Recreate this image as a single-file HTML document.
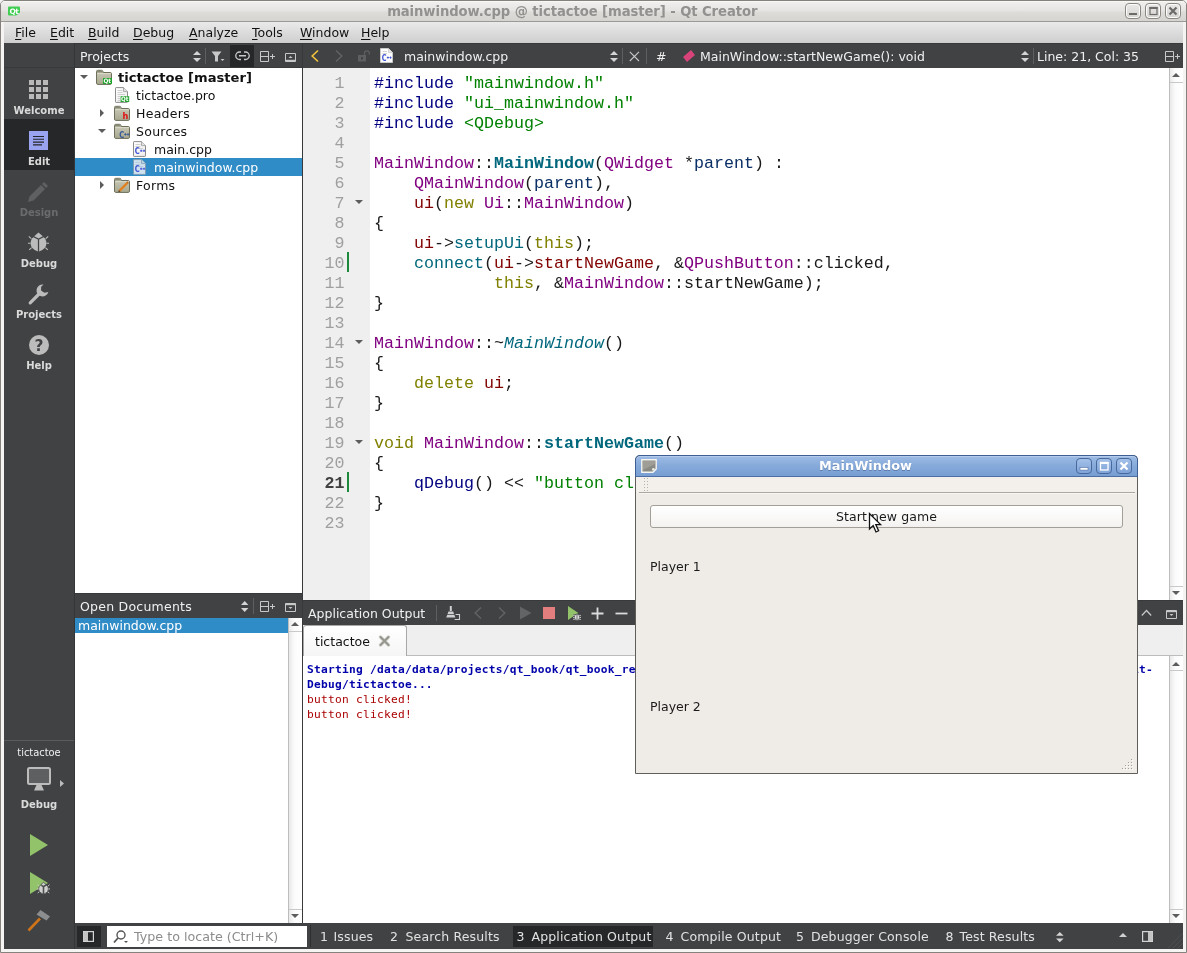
<!DOCTYPE html>
<html>
<head>
<meta charset="utf-8">
<title>mainwindow.cpp @ tictactoe [master] - Qt Creator</title>
<style>
*{box-sizing:border-box;margin:0;padding:0}
html,body{width:1187px;height:953px;overflow:hidden}
body{position:relative;background:#f5f4f2;font-family:"DejaVu Sans","Liberation Sans",sans-serif;font-size:13.33px;color:#000}
.abs{position:absolute}
.t{position:absolute;white-space:nowrap;line-height:1}
svg{position:absolute;overflow:visible}
/* frame */
#frame{left:0;top:0;width:1187px;height:953px;border:1px solid #85827e;border-radius:5px 5px 0 0}
#title{left:1px;top:1px;width:1185px;height:20px;background:linear-gradient(#fbfbfa 0,#efeeec 8%,#e6e4e2 50%,#dedcd9 54%,#d6d4d1 100%);border-radius:4px 4px 0 0}
#titleline{left:1px;top:21px;width:1185px;height:1px;background:#9c9a97}
#menubar{left:4px;top:22px;width:1179px;height:21px;background:linear-gradient(#eaeaea,#cecece)}
.menu{top:27px;font-size:12.5px;color:#111}
.menu u{text-decoration:underline;text-underline-offset:2px}
.dark{background:#404244}
.tb{color:#f0f0f0;font-size:12.5px;margin-top:2px}
.wb{top:3px;width:16px;height:16px;border:1px solid #8a8783;border-radius:4px;box-shadow:inset 0 0 0 1px #fbfbfa;background:linear-gradient(#e9e8e6,#d6d4d1)}
.pb{top:458px;width:16px;height:16px;border:1px solid #48699c;border-radius:4px;background:linear-gradient(#a3c0e8,#7fa4d8)}
/* sidebar */
.mode{left:4px;width:70px;height:51px;color:#dadada;font-weight:bold;font-size:10px;text-align:center}
.mode span{position:absolute;left:0;width:70px;top:37px;line-height:11px}
.vsb{width:14px;border-left:1px solid #bdbdbd;background:linear-gradient(90deg,#e9e9e9,#fbfbfb 40%,#fff)}
/* tree */
.tree{font-size:12.5px;color:#111;margin-top:2px}
/* code */
.code{margin-top:2px;font-family:"Liberation Mono","DejaVu Sans Mono",monospace;font-size:16.66px;white-space:pre;line-height:20px}
.ln{position:absolute;left:303px;width:41.5px;text-align:right;color:#9f9f9f;height:20px}
.cl{position:absolute;left:374px;height:20px;color:#1a1a1a}
.pp{color:#000080}.st{color:#008000}.ty{color:#800080}.fn{color:#00677c}.kw{color:#808000}.mv{color:#800000}.pa{color:#092e64}
.cur{color:#404040;font-weight:bold}
.b{font-weight:bold}.i{font-style:italic}
.sb{color:#e2e2e2;letter-spacing:.15px}
.out{font-family:"DejaVu Sans Mono","Liberation Mono",monospace;font-size:11.2px;letter-spacing:0.257px;white-space:pre;line-height:15px}
</style>
</head>
<body>
<div id="root" style="position:absolute;left:0;top:0;width:1187px;height:953px;will-change:transform">
<svg width="0" height="0" style="left:0;top:0"><defs><linearGradient id="fg" x1="0" y1="0" x2="0" y2="1"><stop offset="0" stop-color="#cbcbbb"/><stop offset="1" stop-color="#a8a88f"/></linearGradient><linearGradient id="pg" x1="0" y1="0" x2="1" y2="1"><stop offset="0" stop-color="#ffffff"/><stop offset="1" stop-color="#ededed"/></linearGradient></defs></svg>
<div id="frame" class="abs"></div>
<div id="title" class="abs"></div>
<div id="titleline" class="abs"></div>
<div id="menubar" class="abs"></div>
<div class="t" style="left:0;width:1144.5px;text-align:center;top:4.8px;font-weight:bold;font-size:13.2px;color:#939190;letter-spacing:-0.08px">mainwindow.cpp @ tictactoe [master] - Qt Creator</div>
<svg style="left:8px;top:6px" width="14" height="12" viewBox="0 0 14 12"><path d="M0 1.5Q0 0.5 1 0.5L11 0.5Q12 0.5 12 1.5L12 7L9.5 9.5L1 9.5Q0 9.5 0 8.5Z" fill="#41cd52"/><path d="M8 9.5L12 6.5L12 10L10 11Z" fill="#d8d8d8" opacity=".8"/><text x="1.6" y="7.6" font-size="7.5" font-weight="bold" fill="#fff" font-family="DejaVu Sans, Liberation Sans, sans-serif" letter-spacing="-0.6">Qt</text></svg>
<div class="abs wb" style="left:1125px"></div><div class="abs wb" style="left:1145px"></div><div class="abs wb" style="left:1165px"></div>
<svg style="left:1125px;top:3px" width="56" height="16" viewBox="0 0 56 16"><rect x="4" y="10" width="8" height="2" fill="#6d6b68"/><rect x="25" y="4.5" width="7" height="7" fill="none" stroke="#6d6b68" stroke-width="1.2"/><rect x="24.4" y="4" width="8.2" height="2" fill="#6d6b68"/><path d="M44.5 4.5L51.5 11.5M51.5 4.5L44.5 11.5" stroke="#6d6b68" stroke-width="2.2"/></svg>

<div class="t menu" style="left:15px"><u>F</u>ile</div>
<div class="t menu" style="left:50px"><u>E</u>dit</div>
<div class="t menu" style="left:88px"><u>B</u>uild</div>
<div class="t menu" style="left:133px"><u>D</u>ebug</div>
<div class="t menu" style="left:189px"><u>A</u>nalyze</div>
<div class="t menu" style="left:252px"><u>T</u>ools</div>
<div class="t menu" style="left:300px"><u>W</u>indow</div>
<div class="t menu" style="left:361px"><u>H</u>elp</div>

<div class="abs dark" style="left:4px;top:43px;width:70px;height:906px"></div>
<div class="abs" style="left:4px;top:67px;width:70px;height:1px;background:#38393b"></div>
<div class="abs" style="left:74px;top:43px;width:1px;height:906px;background:#353638"></div>
<div class="abs" style="left:4px;top:119px;width:70px;height:51px;background:#262728"></div>
<div class="abs mode" style="top:68px"><span>Welcome</span></div>
<div class="abs mode" style="top:119px"><span>Edit</span></div>
<div class="abs mode" style="top:170px;color:#6a6b6d"><span>Design</span></div>
<div class="abs mode" style="top:221px"><span>Debug</span></div>
<div class="abs mode" style="top:272px"><span>Projects</span></div>
<div class="abs mode" style="top:323px"><span>Help</span></div>
<!-- welcome grid -->
<svg style="left:29px;top:80px" width="19" height="19" viewBox="0 0 19 19" fill="#b9b9b9"><rect x="0" y="0" width="5" height="5"/><rect x="7" y="0" width="5" height="5"/><rect x="14" y="0" width="5" height="5"/><rect x="0" y="7" width="5" height="5"/><rect x="7" y="7" width="5" height="5"/><rect x="14" y="7" width="5" height="5"/><rect x="0" y="14" width="5" height="5"/><rect x="7" y="14" width="5" height="5"/><rect x="14" y="14" width="5" height="5"/></svg>
<!-- edit icon -->
<svg style="left:29px;top:131px" width="19" height="19" viewBox="0 0 19 19"><rect width="19" height="19" fill="#99a3ef"/><path d="M4 5.5H15M4 8.3H15M4 11.1H15M4 13.9H13" stroke="#262728" stroke-width="1.1"/></svg>
<!-- design pencil -->
<svg style="left:28px;top:182px" width="20" height="20" viewBox="0 0 20 20" fill="#5e6062"><path d="M0 20L1.5 14.5L13 3L17 7L5.5 18.5Z"/><path d="M14 2L16 0L20 4L18 6Z"/></svg>
<!-- debug bug -->
<svg style="left:28px;top:232px" width="21" height="20" viewBox="0 0 21 20"><g fill="#bcbcbc"><path d="M6.2 4.2L10.5 0.6L14.8 4.2L10.5 6.5Z"/><path d="M9.9 7.6L5.4 5.2Q2.6 7 2.6 11.5Q2.6 17 9.9 19.6Z"/><path d="M11.1 7.6L15.6 5.2Q18.4 7 18.4 11.5Q18.4 17 11.1 19.6Z"/></g><path d="M3.2 6.6L0.8 4.4M2.6 11.2H0M3.6 15.6L1.2 17.8M17.8 6.6L20.2 4.4M18.4 11.2H21M17.4 15.6L19.8 17.8" stroke="#bcbcbc" stroke-width="1.1"/></svg>
<!-- projects wrench -->
<svg style="left:28px;top:284px" width="21" height="21" viewBox="0 0 21 21"><path d="M2.2 18.8L11.5 9.5" stroke="#bcbcbc" stroke-width="3.2" stroke-linecap="round"/><path d="M14.6 0.4A6 6 0 1 0 20.4 7L16.6 8.4L13 6.6L12.6 3Z" fill="#bcbcbc" transform="rotate(8 14 7)"/></svg>
<!-- help -->
<svg style="left:29px;top:335px" width="20" height="20" viewBox="0 0 20 20"><circle cx="10" cy="10" r="10" fill="#bcbcbc"/><text x="10" y="15.6" text-anchor="middle" font-size="15.5" font-weight="bold" fill="#404244" font-family="DejaVu Sans, Liberation Sans, sans-serif">?</text></svg>
<!-- bottom target selector -->
<div class="abs" style="left:4px;top:740px;width:70px;height:1px;background:#595b5c"></div>
<div class="t" style="left:4px;width:70px;text-align:center;top:747.5px;font-size:9.9px;color:#f0f0f0">tictactoe</div>
<div class="t" style="left:4px;width:70px;text-align:center;top:800.3px;font-size:10px;font-weight:bold;color:#dadada">Debug</div>
<svg style="left:27px;top:767.3px" width="40" height="26" viewBox="0 0 40 26"><rect x="1" y="1" width="22" height="16" rx="1.5" fill="#5d5f61" stroke="#bcbcbc" stroke-width="2"/><path d="M9.5 18L7 23.6H17L14.5 18Z" fill="#bcbcbc"/><path d="M33 13L37 16.5L33 20Z" fill="#bcbcbc"/></svg>
<!-- run buttons -->
<svg style="left:29px;top:833px" width="20" height="24" viewBox="0 0 20 24"><path d="M1 1L19 12L1 23Z" fill="#92c36a"/></svg>
<svg style="left:29px;top:871.3px" width="24" height="26" viewBox="0 0 24 26"><path d="M1 1L19 12L1 23Z" fill="#92c36a"/><g transform="translate(8,11) scale(0.62)"><g fill="#d0d0d0" stroke="#404244" stroke-width="1.2"><path d="M6.2 4.2L10.5 0.6L14.8 4.2L10.5 6.5Z"/><path d="M9.9 7.6L5.4 5.2Q2.6 7 2.6 11.5Q2.6 17 9.9 19.6Z"/><path d="M11.1 7.6L15.6 5.2Q18.4 7 18.4 11.5Q18.4 17 11.1 19.6Z"/></g><path d="M3.2 6.6L0.8 4.4M2.6 11.2H0M3.6 15.6L1.2 17.8M17.8 6.6L20.2 4.4M18.4 11.2H21M17.4 15.6L19.8 17.8" stroke="#d0d0d0" stroke-width="1.5"/></g></svg>
<svg style="left:27px;top:909px" width="24" height="24" viewBox="0 0 24 24"><path d="M1.5 21.5L13 9.5" stroke="#cf7418" stroke-width="2.6"/><path d="M9.5 5.5L13.5 1L23 7.5L19.5 11.5Z" fill="#8b8d8f"/></svg>

<div class="abs dark" style="left:75px;top:43px;width:227px;height:25px"></div>
<div class="abs" style="left:75px;top:67px;width:227px;height:1px;background:#38393b"></div>
<div class="abs" style="left:75px;top:43px;width:1108px;height:1px;background:#38393b"></div>
<div class="abs" style="left:75px;top:68px;width:227px;height:525px;background:#fff"></div>
<div class="abs" style="left:302px;top:43px;width:1px;height:880px;background:#38393b"></div>
<div class="t tb" style="left:80px;top:49px">Projects</div>
<svg style="left:193px;top:51px" width="8" height="11" viewBox="0 0 8 11"><path d="M0 4H8L4 0Z M0 7H8L4 11Z" fill="#d4d4d4"/></svg>
<div class="abs" style="left:205px;top:48px;width:1px;height:16px;background:#5d5f61"></div>
<svg style="left:211px;top:51px" width="14" height="11" viewBox="0 0 14 11"><path d="M0.5 0.5H10.5L7 5V10.5H4V5Z" fill="#c8c8c8"/><path d="M9.5 8H13.5L11.5 10Z" fill="#c8c8c8"/></svg>
<div class="abs" style="left:230px;top:45px;width:24px;height:22px;background:#262728"></div>
<svg style="left:235px;top:51px" width="15" height="10" viewBox="0 0 15 10"><path d="M6 1H4.5A3.5 3.5 0 0 0 4.5 8.5H6M9 1H10.5A3.5 3.5 0 0 1 10.5 8.5H9" fill="none" stroke="#c8c8c8" stroke-width="1.3"/><path d="M4 4.75H11" stroke="#c8c8c8" stroke-width="1.5"/></svg>
<svg style="left:260px;top:51px" width="15" height="12" viewBox="0 0 15 12"><path d="M0.5 0.5H8.5V10.5H0.5Z M0.5 5.5H8.5" fill="none" stroke="#c8c8c8"/><path d="M10 5.5H15M12.5 3V8" stroke="#c8c8c8"/></svg>
<svg style="left:285px;top:53px" width="12" height="9" viewBox="0 0 12 9"><path d="M0.5 0.5H10.5V8.5H0.5Z" fill="none" stroke="#c8c8c8"/><path d="M0.5 7.6H10.5" stroke="#c8c8c8" stroke-width="1.6"/><path d="M3.5 5H7.5L5.5 3Z" fill="#c8c8c8"/></svg>
<div class="abs" style="left:75px;top:158px;width:227px;height:18px;background:#308cc6"></div>
<svg style="left:80px;top:75px" width="8" height="4" viewBox="0 0 8 4"><path d="M0 0H8L4 4Z" fill="#5c5c5c"/></svg>
<svg style="left:96px;top:69px" width="16" height="16" viewBox="0 0 16 16"><path d="M0.5 2.5Q0.5 1.3 1.7 1.3L5.6 1.3Q6.6 1.3 6.9 2.2L7.3 3.5L14.3 3.5Q15.5 3.5 15.5 4.7L15.5 14.1Q15.5 15.4 14.2 15.4L1.8 15.4Q0.5 15.4 0.5 14.1Z" fill="url(#fg)" stroke="#6e6f5a"/><path d="M1 1.9H6.4L7 3.6H1Z" fill="#8b8c76"/><path d="M1.2 4.6H14.8" stroke="#dadacb" stroke-width="1"/><rect x="7" y="9" width="9" height="6" fill="#21a32d"/><text x="7.5" y="14" font-size="6" font-weight="bold" fill="#fff" font-family="DejaVu Sans, sans-serif" textLength="7.6" lengthAdjust="spacingAndGlyphs">Qt</text></svg>
<div class="t tree" style="left:118px;top:70px;font-weight:bold;font-size:13.1px;margin-top:1px">tictactoe [master]</div>
<svg style="left:114px;top:87px" width="16" height="16" viewBox="0 0 16 16"><path d="M1.5 1.2Q1.5 0.6 2.1 0.6L9.5 0.6L13.5 4.6L13.5 14.8Q13.5 15.4 12.9 15.4L2.1 15.4Q1.5 15.4 1.5 14.8Z" fill="url(#pg)" stroke="#8c8c8c"/><path d="M9.5 0.6V4.6H13.5" fill="#e2e2e2" stroke="#9a9a9a" stroke-width=".8"/><path d="M3.5 3.5H8.5M3.5 5.5H8.5M3.5 7.5H11" stroke="#c9c9c9" stroke-width=".9"/><path d="M3.5 9.5H6M3.5 11.5H6M3.5 13.5H6" stroke="#c9c9c9" stroke-width=".9"/><rect x="6.6" y="9.2" width="8.6" height="5.8" fill="#21a32d"/><text x="7.1" y="14" font-size="6" font-weight="bold" fill="#fff" font-family="DejaVu Sans, sans-serif" textLength="7.4" lengthAdjust="spacingAndGlyphs">Qt</text></svg>
<div class="t tree" style="left:136px;top:88px">tictactoe.pro</div>
<svg style="left:100px;top:109px" width="4" height="8" viewBox="0 0 4 8"><path d="M0 0V8L4 4Z" fill="#5c5c5c"/></svg>
<svg style="left:114px;top:105px" width="16" height="16" viewBox="0 0 16 16"><path d="M0.5 2.5Q0.5 1.3 1.7 1.3L5.6 1.3Q6.6 1.3 6.9 2.2L7.3 3.5L14.3 3.5Q15.5 3.5 15.5 4.7L15.5 14.1Q15.5 15.4 14.2 15.4L1.8 15.4Q0.5 15.4 0.5 14.1Z" fill="url(#fg)" stroke="#6e6f5a"/><path d="M1 1.9H6.4L7 3.6H1Z" fill="#8b8c76"/><path d="M1.2 4.6H14.8" stroke="#dadacb" stroke-width="1"/><text x="8.4" y="13.6" font-size="8.2" font-weight="bold" fill="#e01010" font-family="DejaVu Sans, sans-serif">h</text></svg>
<div class="t tree" style="left:136px;top:106px;letter-spacing:.28px">Headers</div>
<svg style="left:98px;top:129px" width="8" height="4" viewBox="0 0 8 4"><path d="M0 0H8L4 4Z" fill="#5c5c5c"/></svg>
<svg style="left:114px;top:123px" width="16" height="16" viewBox="0 0 16 16"><path d="M0.5 2.5Q0.5 1.3 1.7 1.3L5.6 1.3Q6.6 1.3 6.9 2.2L7.3 3.5L14.3 3.5Q15.5 3.5 15.5 4.7L15.5 14.1Q15.5 15.4 14.2 15.4L1.8 15.4Q0.5 15.4 0.5 14.1Z" fill="url(#fg)" stroke="#6e6f5a"/><path d="M1 1.9H6.4L7 3.6H1Z" fill="#8b8c76"/><path d="M1.2 4.6H14.8" stroke="#dadacb" stroke-width="1"/><text x="5.3" y="14.6" font-size="9.4" font-weight="bold" fill="#35589a" font-family="DejaVu Sans, sans-serif" textLength="5" lengthAdjust="spacingAndGlyphs">C</text><path d="M10.2 11.4H12.6M11.4 10.2V12.6M12.9 11.4H15.3M14.1 10.2V12.6" stroke="#35589a" stroke-width=".9"/></svg>
<div class="t tree" style="left:136px;top:124px;letter-spacing:.28px">Sources</div>
<svg style="left:132px;top:141px" width="16" height="16" viewBox="0 0 16 16"><path d="M1.5 1.2Q1.5 0.6 2.1 0.6L9.5 0.6L13.5 4.6L13.5 14.8Q13.5 15.4 12.9 15.4L2.1 15.4Q1.5 15.4 1.5 14.8Z" fill="url(#pg)" stroke="#8c8c8c"/><path d="M9.5 0.6V4.6H13.5" fill="#e2e2e2" stroke="#9a9a9a" stroke-width=".8"/><path d="M3.5 3.5H8.5M3.5 5.5H8.5M3.5 7.5H11" stroke="#c9c9c9" stroke-width=".9"/><text x="2.8" y="13" font-size="9.2" font-weight="bold" fill="#3c50d6" font-family="DejaVu Sans, sans-serif" textLength="5" lengthAdjust="spacingAndGlyphs">C</text><path d="M8 9.8H10.4M9.2 8.6V11M10.8 9.8H13.2M12 8.6V11" stroke="#3c50d6" stroke-width=".9"/></svg>
<div class="t tree" style="left:154px;top:142px">main.cpp</div>
<svg style="left:132px;top:159px" width="16" height="16" viewBox="0 0 16 16"><path d="M1.5 1.2Q1.5 0.6 2.1 0.6L9.5 0.6L13.5 4.6L13.5 14.8Q13.5 15.4 12.9 15.4L2.1 15.4Q1.5 15.4 1.5 14.8Z" fill="#cfe1ef" stroke="#7f9cb3"/><path d="M9.5 0.6V4.6H13.5" fill="#bcd3e4" stroke="#7f9cb3" stroke-width=".8"/><path d="M3.5 3.5H8.5M3.5 5.5H8.5M3.5 7.5H11" stroke="#b4c9d9" stroke-width=".9"/><text x="2.8" y="13" font-size="9.2" font-weight="bold" fill="#3c50d6" font-family="DejaVu Sans, sans-serif" textLength="5" lengthAdjust="spacingAndGlyphs">C</text><path d="M8 9.8H10.4M9.2 8.6V11M10.8 9.8H13.2M12 8.6V11" stroke="#3c50d6" stroke-width=".9"/></svg>
<div class="t tree" style="left:154px;top:160px;color:#fff">mainwindow.cpp</div>
<svg style="left:100px;top:181px" width="4" height="8" viewBox="0 0 4 8"><path d="M0 0V8L4 4Z" fill="#5c5c5c"/></svg>
<svg style="left:114px;top:177px" width="16" height="16" viewBox="0 0 16 16"><path d="M0.5 2.5Q0.5 1.3 1.7 1.3L5.6 1.3Q6.6 1.3 6.9 2.2L7.3 3.5L14.3 3.5Q15.5 3.5 15.5 4.7L15.5 14.1Q15.5 15.4 14.2 15.4L1.8 15.4Q0.5 15.4 0.5 14.1Z" fill="url(#fg)" stroke="#6e6f5a"/><path d="M1 1.9H6.4L7 3.6H1Z" fill="#8b8c76"/><path d="M1.2 4.6H14.8" stroke="#dadacb" stroke-width="1"/><path d="M5.6 13.8L13 6.2" stroke="#e67e17" stroke-width="2.3"/><path d="M4.2 15.2L4.9 12.9L6.5 14.5Z" fill="#5a3c16"/><path d="M12.2 5.4L13.3 4.3L14.9 5.9L13.8 7Z" fill="#c96a10"/></svg>
<div class="t tree" style="left:136px;top:178px;letter-spacing:.28px">Forms</div>
<div class="abs dark" style="left:75px;top:593px;width:227px;height:25px"></div>
<div class="abs" style="left:75px;top:593px;width:227px;height:1px;background:#38393b"></div>
<div class="abs" style="left:75px;top:618px;width:227px;height:305px;background:#fff"></div>
<div class="t tb" style="left:80px;top:599px;letter-spacing:.24px">Open Documents</div>
<svg style="left:240.7px;top:601px" width="7.4" height="11" viewBox="0 0 8 11" preserveAspectRatio="none"><path d="M0 4H8L4 0Z M0 7H8L4 11Z" fill="#d4d4d4"/></svg>
<div class="abs" style="left:253px;top:598px;width:1px;height:16px;background:#5d5f61"></div>
<svg style="left:260px;top:601px" width="15" height="12" viewBox="0 0 15 12"><path d="M0.5 0.5H8.5V10.5H0.5Z M0.5 5.5H8.5" fill="none" stroke="#c8c8c8"/><path d="M10 5.5H15M12.5 3V8" stroke="#c8c8c8"/></svg>
<svg style="left:285px;top:603px" width="12" height="9" viewBox="0 0 12 9"><path d="M0.5 0.5H10.5V8.5H0.5Z" fill="none" stroke="#c8c8c8"/><path d="M0.5 1.4H10.5" stroke="#c8c8c8" stroke-width="1.6"/><path d="M3.5 4H7.5L5.5 6Z" fill="#c8c8c8"/></svg>
<div class="abs" style="left:75px;top:618px;width:213px;height:15px;background:#308cc6"></div>
<div class="t tree" style="left:78px;top:618.3px;color:#fff">mainwindow.cpp</div>
<div class="abs vsb" style="left:288px;top:618px;height:305px"></div>
<svg style="left:291px;top:622px" width="8" height="4" viewBox="0 0 8 4"><path d="M0 4H8L4 0Z" fill="#5c5c5c"/></svg>
<svg style="left:291px;top:914px" width="8" height="4" viewBox="0 0 8 4"><path d="M0 0H8L4 4Z" fill="#5c5c5c"/></svg>
<div class="abs" style="left:289px;top:631px;width:13px;height:1px;background:#c9c9c9"></div>
<div class="abs" style="left:289px;top:909px;width:13px;height:1px;background:#c9c9c9"></div>

<div class="abs dark" style="left:303px;top:43px;width:880px;height:25px"></div>
<div class="abs" style="left:303px;top:43px;width:880px;height:1px;background:#38393b"></div>
<div class="abs" style="left:303px;top:68px;width:67px;height:532px;background:#efefef"></div>
<div class="abs" style="left:370px;top:68px;width:799px;height:532px;background:#fff"></div>
<svg style="left:311px;top:50px" width="8" height="12" viewBox="0 0 8 12"><path d="M7 0.5L1.2 6L7 11.5" fill="none" stroke="#f3c33c" stroke-width="1.6"/></svg>
<svg style="left:335px;top:50px" width="8" height="12" viewBox="0 0 8 12"><path d="M1 0.5L6.8 6L1 11.5" fill="none" stroke="#626466" stroke-width="1.4"/></svg>
<svg style="left:358px;top:50px" width="13" height="12" viewBox="0 0 13 12"><rect x="0" y="5" width="8" height="6.5" fill="#5d5f61"/><rect x="3" y="7" width="2" height="2.5" fill="#404244"/><path d="M6.5 5V3.2A2.4 2.4 0 0 1 11.3 3.2V4.5" fill="none" stroke="#5d5f61" stroke-width="1.2"/></svg>
<svg style="left:380px;top:48px" width="13" height="15" viewBox="0 0 13 15"><path d="M0.5 0.5L8.5 0.5L12.5 4.5L12.5 14.5L0.5 14.5Z" fill="#fdfdfd" stroke="#c9c9c9"/><path d="M8.5 0.5V4.5H12.5" fill="#e8e8e8" stroke="#c9c9c9" stroke-width=".8"/><path d="M2.5 3.5H7M2.5 5.5H7" stroke="#d0d0d0" stroke-width=".9"/><text x="1.8" y="12.6" font-size="8.6" font-weight="bold" fill="#3c50d6" font-family="DejaVu Sans, sans-serif" textLength="4.8" lengthAdjust="spacingAndGlyphs">C</text><path d="M6.8 9.6H9M7.9 8.5V10.7M9.4 9.6H11.6M10.5 8.5V10.7" stroke="#3c50d6" stroke-width=".9"/></svg>
<div class="t tb" style="left:404px;top:49px">mainwindow.cpp</div>
<svg style="left:610px;top:51px" width="8" height="11" viewBox="0 0 8 11"><path d="M0 4H8L4 0Z M0 7H8L4 11Z" fill="#d4d4d4"/></svg>
<div class="abs" style="left:622px;top:48px;width:1px;height:16px;background:#5d5f61"></div>
<svg style="left:629px;top:51px" width="11" height="11" viewBox="0 0 11 11"><path d="M0.8 0.8L10 10M10 0.8L0.8 10" stroke="#c8c8c8" stroke-width="1.1"/></svg>
<div class="abs" style="left:646px;top:48px;width:1px;height:16px;background:#5d5f61"></div>
<div class="t tb" style="left:656px;top:49px">#</div>
<svg style="left:683px;top:50px" width="12" height="12" viewBox="0 0 12 12"><path d="M0 7L8 0L12 5L4 12Z" fill="#d8447a"/></svg>
<div class="t tb" style="left:700px;top:49px">MainWindow::startNewGame(): void</div>
<svg style="left:1021px;top:51px" width="8" height="11" viewBox="0 0 8 11"><path d="M0 4H8L4 0Z M0 7H8L4 11Z" fill="#d4d4d4"/></svg>
<div class="abs" style="left:1033px;top:48px;width:1px;height:16px;background:#5d5f61"></div>
<div class="t tb" style="left:1037px;top:49px">Line: 21, Col: 35</div>
<svg style="left:1165px;top:51px" width="15" height="12" viewBox="0 0 15 12"><path d="M0.5 0.5H8.5V10.5H0.5Z M0.5 5.5H8.5" fill="none" stroke="#c8c8c8"/><path d="M10 5.5H15M12.5 3V8" stroke="#c8c8c8"/></svg>
<div class="abs vsb" style="left:1169px;top:68px;height:532px"></div>
<svg style="left:1172px;top:73px" width="8" height="4" viewBox="0 0 8 4"><path d="M0 4H8L4 0Z" fill="#5c5c5c"/></svg>
<svg style="left:1172px;top:591px" width="8" height="4" viewBox="0 0 8 4"><path d="M0 0H8L4 4Z" fill="#5c5c5c"/></svg>
<div class="abs" style="left:1170px;top:82px;width:13px;height:1px;background:#c9c9c9"></div>
<div class="abs" style="left:1170px;top:586px;width:13px;height:1px;background:#c9c9c9"></div>
<div class="ln code" style="top:72px">1</div><div class="cl code" style="top:72px"><span class="pp">#include</span> <span class="st">"mainwindow.h"</span></div>
<div class="ln code" style="top:92px">2</div><div class="cl code" style="top:92px"><span class="pp">#include</span> <span class="st">"ui_mainwindow.h"</span></div>
<div class="ln code" style="top:112px">3</div><div class="cl code" style="top:112px"><span class="pp">#include</span> <span class="st">&lt;QDebug&gt;</span></div>
<div class="ln code" style="top:132px">4</div><div class="cl code" style="top:132px"></div>
<div class="ln code" style="top:152px">5</div><div class="cl code" style="top:152px"><span class="ty">MainWindow</span>::<span class="fn b">MainWindow</span>(<span class="ty">QWidget</span> *<span class="pa">parent</span>) :</div>
<div class="ln code" style="top:172px">6</div><div class="cl code" style="top:172px">    <span class="ty">QMainWindow</span>(<span class="pa">parent</span>),</div>
<div class="ln code" style="top:192px">7</div><div class="cl code" style="top:192px">    <span class="mv">ui</span>(<span class="kw">new</span> <span class="ty">Ui</span>::<span class="ty">MainWindow</span>)</div>
<div class="ln code" style="top:212px">8</div><div class="cl code" style="top:212px">{</div>
<div class="ln code" style="top:232px">9</div><div class="cl code" style="top:232px">    <span class="mv">ui</span>-&gt;<span class="fn">setupUi</span>(<span class="kw">this</span>);</div>
<div class="ln code" style="top:252px">10</div><div class="cl code" style="top:252px">    <span class="fn">connect</span>(<span class="mv">ui</span>-&gt;<span class="mv">startNewGame</span>, &amp;<span class="ty">QPushButton</span>::clicked,</div>
<div class="ln code" style="top:272px">11</div><div class="cl code" style="top:272px">            <span class="kw">this</span>, &amp;<span class="ty">MainWindow</span>::startNewGame);</div>
<div class="ln code" style="top:292px">12</div><div class="cl code" style="top:292px">}</div>
<div class="ln code" style="top:312px">13</div><div class="cl code" style="top:312px"></div>
<div class="ln code" style="top:332px">14</div><div class="cl code" style="top:332px"><span class="ty">MainWindow</span>::~<span class="fn i">MainWindow</span>()</div>
<div class="ln code" style="top:352px">15</div><div class="cl code" style="top:352px">{</div>
<div class="ln code" style="top:372px">16</div><div class="cl code" style="top:372px">    <span class="kw">delete</span> <span class="mv">ui</span>;</div>
<div class="ln code" style="top:392px">17</div><div class="cl code" style="top:392px">}</div>
<div class="ln code" style="top:412px">18</div><div class="cl code" style="top:412px"></div>
<div class="ln code" style="top:432px">19</div><div class="cl code" style="top:432px"><span class="kw">void</span> <span class="ty">MainWindow</span>::<span class="fn b">startNewGame</span>()</div>
<div class="ln code" style="top:452px">20</div><div class="cl code" style="top:452px">{</div>
<div class="ln code cur" style="top:472px">21</div><div class="cl code" style="top:472px">    <span class="pp">qDebug</span>() &lt;&lt; <span class="st">"button clicked!"</span>;</div>
<div class="ln code" style="top:492px">22</div><div class="cl code" style="top:492px">}</div>
<div class="ln code" style="top:512px">23</div><div class="cl code" style="top:512px"></div>
<svg style="left:355px;top:200px" width="8" height="4" viewBox="0 0 8 4"><path d="M0 0H8L4 4Z" fill="#5c5c5c"/></svg>
<svg style="left:355px;top:340px" width="8" height="4" viewBox="0 0 8 4"><path d="M0 0H8L4 4Z" fill="#5c5c5c"/></svg>
<svg style="left:355px;top:440px" width="8" height="4" viewBox="0 0 8 4"><path d="M0 0H8L4 4Z" fill="#5c5c5c"/></svg>
<div class="abs" style="left:347px;top:252px;width:2px;height:20px;background:#1a8a3a"></div>
<div class="abs" style="left:347px;top:472px;width:2px;height:20px;background:#1a8a3a"></div>

<div class="abs dark" style="left:303px;top:600px;width:880px;height:25px"></div>
<div class="abs" style="left:303px;top:600px;width:880px;height:1px;background:#38393b"></div>
<div class="t tb" style="left:308px;top:606px">Application Output</div>
<div class="abs" style="left:436px;top:605px;width:1px;height:16px;background:#5d5f61"></div>
<svg style="left:445px;top:606px" width="16" height="15" viewBox="0 0 16 15"><path d="M4.8 0H6.8V5H4.8Z" fill="#d0d0d0"/><path d="M3.4 5.6H8.2L9 8H2.6Z" fill="#d0d0d0"/><path d="M2.3 8.8H9.3L10.4 11.6H1.2Z" fill="#d0d0d0"/><path d="M10.6 8.5H14.5V13.5H9.6" fill="none" stroke="#d0d0d0" stroke-width="1.1"/></svg>
<svg style="left:474px;top:607px" width="8" height="12" viewBox="0 0 8 12"><path d="M7 0.5L1.2 6L7 11.5" fill="none" stroke="#626466" stroke-width="1.4"/></svg>
<svg style="left:498px;top:607px" width="8" height="12" viewBox="0 0 8 12"><path d="M1 0.5L6.8 6L1 11.5" fill="none" stroke="#626466" stroke-width="1.4"/></svg>
<svg style="left:520px;top:606px" width="12" height="14" viewBox="0 0 12 14"><path d="M0 0.5L11.5 7L0 13.5Z" fill="#626466"/></svg>
<div class="abs" style="left:543px;top:607px;width:12px;height:12px;background:#e37e7e"></div>
<svg style="left:568px;top:606px" width="15" height="15" viewBox="0 0 15 15"><path d="M0 0L10.4 7L0 14Z" fill="#92c36a"/><path d="M4.6 7.4H13.6V14.6H4.6Z" fill="#404244" opacity=".0"/><g stroke="#404244" stroke-width="1.6"><path d="M5.2 9.4H12.8M5.2 11.4H12.8M5.2 13.4H12.8"/></g><ellipse cx="9" cy="11.2" rx="2.7" ry="3.3" fill="#dcdcdc" stroke="#404244" stroke-width=".7"/><path d="M5.2 9.4H6.6M11.4 9.4H12.8M5 11.4H6.4M11.6 11.4H13M5.2 13.4H6.6M11.4 13.4H12.8" stroke="#dcdcdc" stroke-width=".9"/><path d="M9 8V14.5" stroke="#404244" stroke-width=".7"/></svg>
<svg style="left:591px;top:607px" width="13" height="13" viewBox="0 0 13 13"><path d="M0.5 6.5H12.5M6.5 0.5V12.5" stroke="#dcdcdc" stroke-width="1.8"/></svg>
<svg style="left:615px;top:607px" width="13" height="13" viewBox="0 0 13 13"><path d="M0.5 6.5H12.5" stroke="#dcdcdc" stroke-width="1.8"/></svg>
<svg style="left:1141px;top:609.3px" width="11" height="8" viewBox="0 0 11 8"><path d="M0.8 6.5L5.5 1.5L10.2 6.5" fill="none" stroke="#c8c8c8" stroke-width="1.2"/></svg>
<svg style="left:1166px;top:610px" width="12" height="9" viewBox="0 0 12 9"><path d="M0.5 0.5H10.5V8.5H0.5Z" fill="none" stroke="#c8c8c8"/><path d="M0.5 1.4H10.5" stroke="#c8c8c8" stroke-width="1.6"/><path d="M3.5 4H7.5L5.5 6Z" fill="#c8c8c8"/></svg>
<div class="abs" style="left:303px;top:625px;width:880px;height:31px;background:#efefef;border-bottom:1px solid #bdbdbd"></div>
<div class="abs" style="left:303px;top:625px;width:104px;height:31px;background:linear-gradient(#ffffff,#f5f5f5);border:1px solid #a8a8a8;border-bottom:none;border-radius:3px 3px 0 0"></div>
<div class="t tree" style="left:315px;top:634px">tictactoe</div>
<svg style="left:379px;top:636px" width="11" height="10" viewBox="0 0 11 10"><path d="M1.5 1L9.5 9M9.5 1L1.5 9" stroke="#d2d2cc" stroke-width="3.4" stroke-linecap="round"/><path d="M1.5 1L9.5 9M9.5 1L1.5 9" stroke="#979790" stroke-width="2" stroke-linecap="round"/></svg>
<div class="abs" style="left:303px;top:656px;width:866px;height:267px;background:#fff"></div>
<div class="t out b" style="left:307px;top:662px;color:#0000aa">Starting /data/data/projects/qt_book/qt_book_repo/chapter_03/tictactoe_game/build-tictactoe-2-Desktop_Qt_5_9_0_GCC_64bit-</div>
<div class="t out b" style="left:307px;top:677px;color:#0000aa">Debug/tictactoe...</div>
<div class="t out" style="left:307px;top:692px;color:#aa0000">button clicked!</div>
<div class="t out" style="left:307px;top:707px;color:#aa0000">button clicked!</div>
<div class="abs vsb" style="left:1169px;top:656px;height:267px"></div>
<svg style="left:1172px;top:661.5px" width="8" height="4" viewBox="0 0 8 4"><path d="M0 4H8L4 0Z" fill="#5c5c5c"/></svg>
<svg style="left:1172px;top:914px" width="8" height="4" viewBox="0 0 8 4"><path d="M0 0H8L4 4Z" fill="#5c5c5c"/></svg>
<div class="abs" style="left:1170px;top:670px;width:13px;height:1px;background:#c9c9c9"></div>
<div class="abs" style="left:1170px;top:909px;width:13px;height:1px;background:#c9c9c9"></div>

<div class="abs dark" style="left:75px;top:923px;width:1108px;height:26px"></div>
<div class="abs" style="left:77px;top:926px;width:24px;height:21px;background:#27282a"></div>
<svg style="left:83px;top:931px" width="11" height="11" viewBox="0 0 11 11"><rect x="0.6" y="0.6" width="9.8" height="9.8" fill="none" stroke="#d4d4d4" stroke-width="1.2"/><rect x="0.5" y="1" width="4.5" height="9" fill="#c4c4c4"/></svg>
<div class="abs" style="left:107px;top:926px;width:200px;height:21px;background:#fff"></div>
<svg style="left:113px;top:930px" width="16" height="14" viewBox="0 0 16 14"><circle cx="8" cy="5" r="4" fill="none" stroke="#555" stroke-width="1.4"/><path d="M5 8L1 12.5" stroke="#555" stroke-width="1.8"/><path d="M11 11H15L13 13Z" fill="#555"/></svg>
<div class="t" style="left:134px;top:930.6px;font-size:12.7px;color:#8c8c8c">Type to locate (Ctrl+K)</div>
<div class="abs" style="left:310px;top:925px;width:1px;height:22px;background:#2e2f31"></div>
<div class="abs" style="left:513px;top:926px;width:140px;height:21px;background:#262728"></div>
<div class="t tb sb" style="left:320px;top:929px">1</div><div class="t tb sb" style="left:333.5px;top:929px">Issues</div>
<div class="t tb sb" style="left:390px;top:929px">2</div><div class="t tb sb" style="left:405.5px;top:929px">Search Results</div>
<div class="t tb sb" style="left:516.5px;top:929px">3</div><div class="t tb sb" style="left:531.5px;top:929px">Application Output</div>
<div class="t tb sb" style="left:665.5px;top:929px">4</div><div class="t tb sb" style="left:680.5px;top:929px">Compile Output</div>
<div class="t tb sb" style="left:796px;top:929px">5</div><div class="t tb sb" style="left:811px;top:929px">Debugger Console</div>
<div class="t tb sb" style="left:945.5px;top:929px">8</div><div class="t tb sb" style="left:959.5px;top:929px">Test Results</div>
<svg style="left:1056px;top:932px" width="7.6" height="10.2" viewBox="0 0 8 11" preserveAspectRatio="none"><path d="M0 4H8L4 0Z M0 7H8L4 11Z" fill="#d4d4d4"/></svg>
<svg style="left:1118.7px;top:933px" width="8" height="4" viewBox="0 0 8 4"><path d="M0 4H8L4 0Z" fill="#d0d0d0"/></svg>
<svg style="left:1142px;top:931px" width="11" height="11" viewBox="0 0 11 11"><rect x="0.6" y="0.6" width="9.8" height="9.8" fill="none" stroke="#d4d4d4" stroke-width="1.2"/><rect x="6" y="1" width="4.5" height="9" fill="#c4c4c4"/></svg>
<svg style="left:1167px;top:932px" width="16" height="16" viewBox="0 0 16 16"><path d="M16 1L1 16M16 6L6 16M16 11L11 16" stroke="#4c4e50" stroke-width="1"/></svg>

<div class="abs" style="left:635px;top:455px;width:503px;height:319px;background:#efebe7;border:1px solid #605e5b;border-radius:5px 5px 0 0"></div>
<div class="abs" style="left:636px;top:456px;width:501px;height:20px;background:linear-gradient(#9bbae4,#86aada 45%,#789ed2);border-radius:4px 4px 0 0;border-top:1px solid #b4cbec"></div>
<div class="abs" style="left:635px;top:455px;width:503px;height:22px;border:1px solid #3d5f94;border-bottom:none;border-radius:5px 5px 0 0"></div>
<div class="abs" style="left:636px;top:476px;width:501px;height:1px;background:#4b6fa5"></div>
<div class="abs" style="left:636px;top:477px;width:501px;height:15px;background:#f3f0ec"></div>
<div class="abs" style="left:639px;top:492px;width:496px;height:1px;background:#aaa6a0"></div>
<div class="abs" style="left:639px;top:493px;width:496px;height:1px;background:#f8f6f4"></div>
<svg style="left:644px;top:478px" width="4" height="14" viewBox="0 0 4 14"><rect x="0" y="0" width="1" height="1" fill="#b5b1ab"/><rect x="3" y="0" width="1" height="1" fill="#b5b1ab"/><rect x="0" y="3" width="1" height="1" fill="#b5b1ab"/><rect x="3" y="3" width="1" height="1" fill="#b5b1ab"/><rect x="0" y="6" width="1" height="1" fill="#b5b1ab"/><rect x="3" y="6" width="1" height="1" fill="#b5b1ab"/><rect x="0" y="9" width="1" height="1" fill="#b5b1ab"/><rect x="3" y="9" width="1" height="1" fill="#b5b1ab"/><rect x="0" y="12" width="1" height="1" fill="#b5b1ab"/><rect x="3" y="12" width="1" height="1" fill="#b5b1ab"/></svg>
<div class="t" style="left:636px;width:459px;text-align:center;top:460px;font-weight:bold;font-size:12.9px;color:#fff;text-shadow:0 1px 0 rgba(60,90,140,.55)">MainWindow</div>
<svg style="left:641px;top:459px" width="16" height="14" viewBox="0 0 16 14"><path d="M0.8 0.8H15.2V10L12 13.2H0.8Z" fill="#8a8a84" stroke="#f4f4f0" stroke-width="1.4"/><path d="M2 2H14V5L2 11Z" fill="#a6a6a0" opacity=".7"/><circle cx="12.4" cy="10.4" r="1.4" fill="#e8e8e4"/></svg>
<div class="abs pb" style="left:1076px"></div><div class="abs pb" style="left:1096px"></div><div class="abs pb" style="left:1116px"></div>
<svg style="left:1076px;top:458px" width="56" height="16" viewBox="0 0 56 16"><rect x="4" y="9.5" width="8" height="2.6" fill="#fff" stroke="#4d6fa3" stroke-width=".6"/><rect x="24.5" y="4.5" width="7.5" height="7.5" fill="none" stroke="#fff" stroke-width="1.3"/><rect x="24" y="4" width="8.5" height="2" fill="#fff"/><path d="M44.5 4.5L51.5 11.5M51.5 4.5L44.5 11.5" stroke="#fff" stroke-width="2.2"/></svg>
<div class="abs" style="left:650px;top:505px;width:473px;height:23px;border:1px solid #a29e98;border-radius:3px;background:linear-gradient(#ffffff,#faf9f8 50%,#f4f2f0)"></div>
<div class="t" style="left:650px;width:473px;text-align:center;top:511px;font-size:12.5px;color:#1a1a1a;letter-spacing:.1px">Start new game</div>
<div class="t" style="left:650px;top:561px;font-size:12.5px;color:#1a1a1a">Player 1</div>
<div class="t" style="left:650px;top:701px;font-size:12.5px;color:#1a1a1a">Player 2</div>
<svg style="left:1122px;top:759px" width="11" height="11" viewBox="0 0 11 11"><rect x="9" y="0" width="1" height="1" fill="#a39f99"/><rect x="10" y="1" width="1" height="1" fill="#fff"/><rect x="6" y="3" width="1" height="1" fill="#a39f99"/><rect x="7" y="4" width="1" height="1" fill="#fff"/><rect x="9" y="3" width="1" height="1" fill="#a39f99"/><rect x="10" y="4" width="1" height="1" fill="#fff"/><rect x="3" y="6" width="1" height="1" fill="#a39f99"/><rect x="4" y="7" width="1" height="1" fill="#fff"/><rect x="6" y="6" width="1" height="1" fill="#a39f99"/><rect x="7" y="7" width="1" height="1" fill="#fff"/><rect x="9" y="6" width="1" height="1" fill="#a39f99"/><rect x="10" y="7" width="1" height="1" fill="#fff"/><rect x="0" y="9" width="1" height="1" fill="#a39f99"/><rect x="1" y="10" width="1" height="1" fill="#fff"/><rect x="3" y="9" width="1" height="1" fill="#a39f99"/><rect x="4" y="10" width="1" height="1" fill="#fff"/><rect x="6" y="9" width="1" height="1" fill="#a39f99"/><rect x="7" y="10" width="1" height="1" fill="#fff"/><rect x="9" y="9" width="1" height="1" fill="#a39f99"/><rect x="10" y="10" width="1" height="1" fill="#fff"/></svg>
<svg style="left:868px;top:512px" width="14" height="22" viewBox="0 0 14 22"><path d="M1.5 1.5V17L5.2 13.6L8 20L10.6 18.8L7.8 12.6H12.6Z" fill="#fff" stroke="#111" stroke-width="1.3" stroke-linejoin="miter"/></svg>

</div>
</body>
</html>
